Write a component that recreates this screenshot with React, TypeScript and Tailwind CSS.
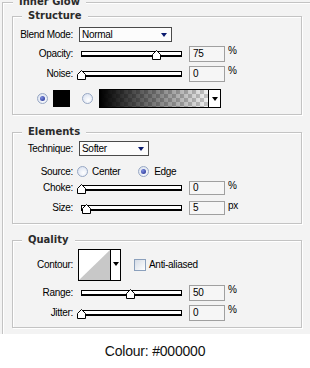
import React from 'react'

const txt = "font-['Liberation_Sans',Arial,sans-serif] text-[10px] tracking-[-0.3px] text-black"

function Legend({ children, left = 'left-[9px]' }: { children: React.ReactNode; left?: string }) {
  return (
    <span
      className={`absolute top-[-7px] ${left} bg-[#f3f3f3] px-[6px] font-['DejaVu_Sans',sans-serif] text-[10px] leading-[12px] font-bold text-[#2b2b2b]`}
    >
      {children}
    </span>
  )
}

function Box({ title, className, children }: { title: string; className: string; children: React.ReactNode }) {
  return (
    <div
      className={`relative ml-[9px] w-[290px] border border-[#c3c3c3] shadow-[inset_1px_1px_0_#fff,1px_1px_0_#fff] ${className}`}
    >
      <Legend>{title}</Legend>
      {children}
    </div>
  )
}

function Label({ children }: { children: React.ReactNode }) {
  return <span className={`w-[60px] shrink-0 text-right leading-[12px] ${txt}`}>{children}</span>
}

function Arrow({ color = 'border-t-[#0a1a6e]' }: { color?: string }) {
  return <span className={`h-0 w-0 border-x-[3.5px] border-t-[4px] border-x-transparent ${color}`} />
}

function Select({ value, width }: { value: string; width: string }) {
  return (
    <div className={`ml-[6px] flex h-[15px] items-center justify-between border border-[#4a4a4a] bg-[#fcfcfc] pl-[2px] pr-[4px] ${width}`}>
      <span className={`leading-[12px] ${txt}`}>{value}</span>
      <Arrow />
    </div>
  )
}

function Slider({ left }: { left: number }) {
  return (
    <div className="relative ml-[8px] h-[6px] w-[101px] border border-b-2 border-black bg-white">
      <svg className="absolute top-[-2px]" style={{ left }} width="9" height="10" viewBox="0 0 9 10">
        <polygon points="4.5,0.5 8.5,4.5 8.5,9.5 0.5,9.5 0.5,4.5" fill="#fff" stroke="#000" />
      </svg>
    </div>
  )
}

function NumBox({ value, unit, h = 'h-[16px]' }: { value: string; unit: string; h?: string }) {
  return (
    <>
      <div className={`ml-[7px] flex w-[36px] items-center border border-[#a0a0a0] bg-[#f6f6f6] pl-[3px] ${h}`}>
        <span className={`leading-[12px] ${txt}`}>{value}</span>
      </div>
      <span className={`ml-[3px] self-start leading-[10px] ${txt}`}>{unit}</span>
    </>
  )
}

function Radio({ checked }: { checked?: boolean }) {
  return (
    <span className="flex h-[11px] w-[11px] shrink-0 items-center justify-center rounded-full border border-[#98a8c4] bg-[radial-gradient(circle_at_60%_65%,#ffffff,#d3dced)]">
      {checked && <span className="h-[5px] w-[5px] rounded-full bg-[radial-gradient(circle_at_35%_35%,#7d8de0,#1d2a8a)]" />}
    </span>
  )
}

function Row({ className, children }: { className: string; children: React.ReactNode }) {
  return <div className={`flex items-center ${className}`}>{children}</div>
}

export default function App() {
  return (
    <div className="h-[368px] w-[310px] overflow-hidden bg-white">
      <div className="h-[334px] bg-[#f3f3f3] pl-[2px] pt-[2px]">
        <div className="relative h-[332px] w-[320px] border-l border-t border-[#c3c3c3] shadow-[inset_1px_1px_0_#fff]">
          <Legend left="left-[10px]">Inner Glow</Legend>

          <Box title="Structure" className="mt-[13px] h-[99px]">
            <Row className="mt-[10px] h-[15px]">
              <Label>Blend Mode:</Label>
              <Select value="Normal" width="w-[93px]" />
            </Row>
            <Row className="mt-[4px] h-[16px]">
              <Label>Opacity:</Label>
              <Slider left={70} />
              <NumBox value="75" unit="%" />
            </Row>
            <Row className="mt-[4px] h-[16px]">
              <Label>Noise:</Label>
              <Slider left={-5} />
              <NumBox value="0" unit="%" />
            </Row>
            <Row className="mt-[7px] h-[19px]">
              <span className="ml-[24px]">
                <Radio checked />
              </span>
              <span className="ml-[5px] h-[17px] w-[17px] bg-black" />
              <span className="ml-[12px]">
                <Radio />
              </span>
              <div className="ml-[6px] flex h-[19px] w-[122px] border border-black">
                <div className="h-full flex-1 bg-[repeating-conic-gradient(#c4c4c4_0%_25%,#f2f2f2_0%_50%)] bg-size-[8px_8px]">
                  <div className="h-full w-full bg-[linear-gradient(to_right,#000000,rgba(0,0,0,0.55)_45%,rgba(0,0,0,0))]" />
                </div>
                <div className="flex w-[12px] items-center justify-center border-l border-black bg-white">
                  <Arrow color="border-t-black" />
                </div>
              </div>
            </Row>
          </Box>

          <Box title="Elements" className="mt-[17px] h-[92px]">
            <Row className="mt-[8px] h-[15px]">
              <Label>Technique:</Label>
              <Select value="Softer" width="w-[70px]" />
            </Row>
            <Row className="mt-[9px] h-[13px]">
              <Label>Source:</Label>
              <span className="ml-[4px]">
                <Radio />
              </span>
              <span className={`ml-[4px] leading-[12px] ${txt}`}>Center</span>
              <span className="ml-[18px]">
                <Radio checked />
              </span>
              <span className={`ml-[5px] leading-[12px] ${txt}`}>Edge</span>
            </Row>
            <Row className="mt-[3px] h-[14px]">
              <Label>Choke:</Label>
              <Slider left={-5} />
              <NumBox value="0" unit="%" h="h-[14px]" />
            </Row>
            <Row className="mt-[6px] h-[14px]">
              <Label>Size:</Label>
              <Slider left={0} />
              <NumBox value="5" unit="px" h="h-[14px]" />
            </Row>
          </Box>

          <Box title="Quality" className="mt-[16px] h-[88px]">
            <Row className="mt-[8px] h-[32px]">
              <Label>Contour:</Label>
              <div className="ml-[5px] flex h-[32px] w-[43px] border border-black bg-white">
                <svg width="31" height="30" viewBox="0 0 31 30">
                  <polygon points="0,30 31,0 31,30" fill="#c8c8c8" />
                </svg>
                <div className="flex flex-1 justify-center border-l border-black pt-[12px]">
                  <Arrow color="border-t-black" />
                </div>
              </div>
              <span className="ml-[13px] h-[12px] w-[12px] border border-[#8ba0bc] bg-[linear-gradient(135deg,#d5dce6,#ffffff)]" />
              <span className={`ml-[3px] leading-[12px] ${txt}`}>Anti-aliased</span>
            </Row>
            <Row className="mt-[4px] h-[16px]">
              <Label>Range:</Label>
              <Slider left={44} />
              <NumBox value="50" unit="%" />
            </Row>
            <Row className="mt-[4px] h-[16px]">
              <Label>Jitter:</Label>
              <Slider left={-5} />
              <NumBox value="0" unit="%" />
            </Row>
          </Box>
        </div>
      </div>
      <div className="flex h-[34px] items-center justify-center">
        <span className="font-['Liberation_Sans',Arial,sans-serif] text-[14px] tracking-[-0.2px] text-[#111]">
          Colour: #000000
        </span>
      </div>
    </div>
  )
}
